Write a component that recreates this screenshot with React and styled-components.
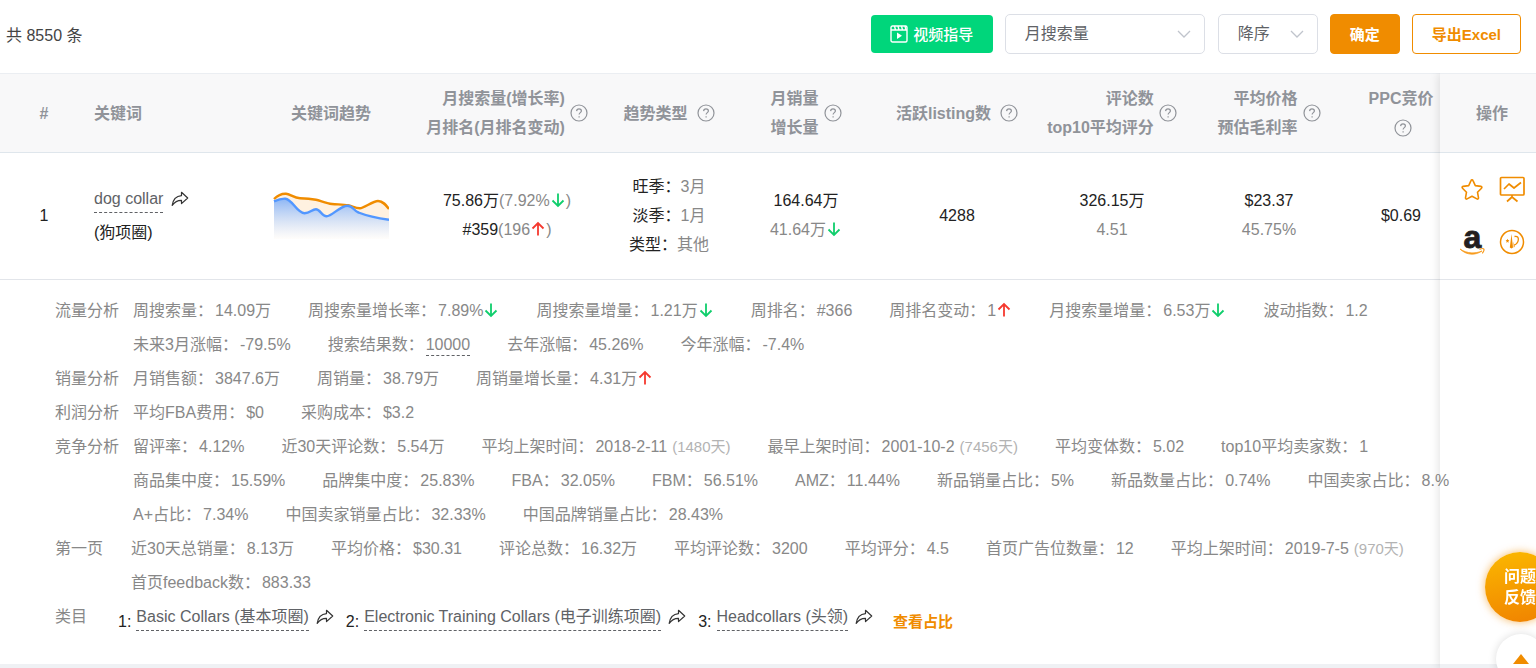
import React from "react";
import styled, { createGlobalStyle } from "styled-components";

const details = [
  {
    title: "流量分析",
    items: [
      { label: "周搜索量", value: "14.09万" },
      { label: "周搜索量增长率", value: "7.89%", trend: "down" },
      { label: "周搜索量增量", value: "1.21万", trend: "down" },
      { label: "周排名", value: "#366" },
      { label: "周排名变动", value: "1", trend: "up" },
      { label: "月搜索量增量", value: "6.53万", trend: "down" },
      { label: "波动指数", value: "1.2" },
      { label: "未来3月涨幅", value: "-79.5%" },
      { label: "搜索结果数", value: "10000", link: true },
      { label: "去年涨幅", value: "45.26%" },
      { label: "今年涨幅", value: "-7.4%" },
    ],
  },
  {
    title: "销量分析",
    items: [
      { label: "月销售额", value: "3847.6万" },
      { label: "周销量", value: "38.79万" },
      { label: "周销量增长量", value: "4.31万", trend: "up" },
    ],
  },
  {
    title: "利润分析",
    items: [
      { label: "平均FBA费用", value: "$0" },
      { label: "采购成本", value: "$3.2" },
    ],
  },
  {
    title: "竞争分析",
    items: [
      { label: "留评率", value: "4.12%" },
      { label: "近30天评论数", value: "5.54万" },
      { label: "平均上架时间", value: "2018-2-11", note: "(1480天)" },
      { label: "最早上架时间", value: "2001-10-2", note: "(7456天)" },
      { label: "平均变体数", value: "5.02" },
      { label: "top10平均卖家数", value: "1" },
      { label: "商品集中度", value: "15.59%" },
      { label: "品牌集中度", value: "25.83%" },
      { label: "FBA", value: "32.05%" },
      { label: "FBM", value: "56.51%" },
      { label: "AMZ", value: "11.44%" },
      { label: "新品销量占比", value: "5%" },
      { label: "新品数量占比", value: "0.74%" },
      { label: "中国卖家占比", value: "8.%" },
      { label: "A+占比", value: "7.34%" },
      { label: "中国卖家销量占比", value: "32.33%" },
      { label: "中国品牌销量占比", value: "28.43%" },
    ],
  },
  {
    title: "第一页",
    labelWidth: 76,
    items: [
      { label: "近30天总销量", value: "8.13万" },
      { label: "平均价格", value: "$30.31" },
      { label: "评论总数", value: "16.32万" },
      { label: "平均评论数", value: "3200" },
      { label: "平均评分", value: "4.5" },
      { label: "首页广告位数量", value: "12" },
      { label: "平均上架时间", value: "2019-7-5", note: "(970天)" },
      { label: "首页feedback数", value: "883.33" },
    ],
  },
];

const categories = [
  "Basic Collars (基本项圈)",
  "Electronic Training Collars (电子训练项圈)",
  "Headcollars (头领)",
];

const columnWidths = [88, 160, 166, 186, 138, 136, 166, 144, 170, 86, 96];

function Trend({ dir }) {
  const up = dir === "up";
  return (
    <TrendIcon viewBox="0 0 14 16" $up={up}>
      {up ? (
        <path d="M7 14.500V2.500M1.500 7.500l5.500-5.500 5.500 5.500" />
      ) : (
        <path d="M7 1.500V13.500M1.500 8.500l5.500 5.500 5.500-5.500" />
      )}
    </TrendIcon>
  );
}

function Share() {
  return (
    <ShareIcon viewBox="0 0 18 18">
      <path d="M10.500 2.300l6.200 5.700-6.200 5.600v-3.200C6.500 10.300 4 11.500 1.200 15.400 2 9.600 5.500 6 10.500 5.600z" />
    </ShareIcon>
  );
}

function Help() {
  return (
    <HelpIcon viewBox="0 0 18 18">
      <circle cx="9" cy="9" r="8" />
      <path d="M6.600 7.100C6.700 5.600 7.700 4.800 9 4.800s2.400.8 2.400 2.100c0 1.700-2.300 1.800-2.300 3.700" />
      <path d="M9.100 12.300v1.200" />
    </HelpIcon>
  );
}

function TrendChart() {
  return (
    <svg width="116" height="48" viewBox="0 0 116 48">
      <defs>
        <linearGradient id="blueFill" x1="0" y1="0" x2="0" y2="1">
          <stop offset="0" stopColor="#8db6f5" />
          <stop offset="1" stopColor="#ffffff" stopOpacity="0.6" />
        </linearGradient>
        <linearGradient id="orangeFill" x1="0" y1="0" x2="0" y2="1">
          <stop offset="0.5" stopColor="#fff1e0" />
          <stop offset="1" stopColor="#fffaf4" />
        </linearGradient>
      </defs>
      <path
        fill="url(#orangeFill)"
        d="M1 8C5 4 9 2.500 13 2.700S21 7 27 7.200S39 8 43 8.700S53 12.500 59 13S71 13.500 75 14.300S83 17.500 87 17.300S100 10 105 10S113 14 116 18V48H1Z"
      />
      <path
        fill="url(#blueFill)"
        d="M1 10.300C5 8.500 9 7.500 12.500 7.700C19 8 24 22.300 31.600 22.300C37 22.300 39 18.300 43 18.300C47 18.300 49 25.300 53.500 25.300C59 25.300 67 14.700 74.500 14.700C80 14.700 81 20 85.500 21.500C93 24.500 103 27 116 28.700V48H1Z"
      />
      <path
        fill="none"
        stroke="#f08c00"
        strokeWidth="2.400"
        d="M1 8C5 4 9 2.500 13 2.700S21 7 27 7.200S39 8 43 8.700S53 12.500 59 13S71 13.500 75 14.300S83 17.500 87 17.300S100 10 105 10S113 14 116 18"
      />
      <path
        fill="none"
        stroke="#5297ff"
        strokeWidth="2.400"
        d="M1 10.300C5 8.500 9 7.500 12.500 7.700C19 8 24 22.300 31.600 22.300C37 22.300 39 18.300 43 18.300C47 18.300 49 25.300 53.500 25.300C59 25.300 67 14.700 74.500 14.700C80 14.700 81 20 85.500 21.500C93 24.500 103 27 116 28.700"
      />
    </svg>
  );
}

function HeadCell({ lines, align, gap }) {
  return (
    <Head>
      <HeadInner $gap={gap}>
        <HeadText $align={align}>
          {lines.map((line) => (
            <div key={line}>{line}</div>
          ))}
        </HeadText>
        {gap ? <Help /> : null}
      </HeadInner>
    </Head>
  );
}

function DetailItem({ item }) {
  return (
    <Item>
      <ItemLabel>{item.label}：</ItemLabel>
      {item.link ? <DashedLink href="#results" $muted>{item.value}</DashedLink> : item.value}
      {item.note ? <Note>{item.note}</Note> : null}
      {item.trend ? <Trend dir={item.trend} /> : null}
    </Item>
  );
}

export default function App() {
  return (
    <Page>
      <GlobalStyle />
      <Toolbar>
        <Total>共 8550 条</Total>
        <VideoButton type="button">
          <svg width="18" height="18" viewBox="0 0 18 18" fill="none" stroke="#fff" strokeWidth="1.4">
            <rect x="1" y="1" width="16" height="16" rx="1.5" />
            <path d="M1 5h16M4.500 1l1 4M8 1l1 4M11.500 1l1 4M15 1l1 4" />
            <path d="M7 7.500v6.500l5-3.200z" fill="#fff" stroke="none" />
          </svg>
          视频指导
        </VideoButton>
        <SelectBox $width={200}>
          <select aria-label="排序字段">
            <option>月搜索量</option>
          </select>
          <Chevron viewBox="0 0 14 14">
            <path d="M1 4l6 6 6-6" />
          </Chevron>
        </SelectBox>
        <SelectBox $width={100}>
          <select aria-label="排序方式">
            <option>降序</option>
          </select>
          <Chevron viewBox="0 0 14 14">
            <path d="M1 4l6 6 6-6" />
          </Chevron>
        </SelectBox>
        <Button type="button" $primary>
          确定
        </Button>
        <Button type="button">导出Excel</Button>
      </Toolbar>

      <TableWrap>
        <Table>
          <colgroup>
            {columnWidths.map((width, i) => (
              <Col key={i} $width={width} />
            ))}
          </colgroup>
          <thead>
            <tr>
              <HeadCell lines={["#"]} />
              <Head $left>关键词</Head>
              <HeadCell lines={["关键词趋势"]} />
              <HeadCell lines={["月搜索量(增长率)", "月排名(月排名变动)"]} align="right" gap={5} />
              <HeadCell lines={["趋势类型"]} gap={9} />
              <HeadCell lines={["月销量", "增长量"]} align="right" gap={5} />
              <HeadCell lines={["活跃listing数"]} gap={9} />
              <HeadCell lines={["评论数", "top10平均评分"]} align="right" gap={5} />
              <HeadCell lines={["平均价格", "预估毛利率"]} align="right" gap={5} />
              <Head $shift>
                <div>PPC竞价</div>
                <HelpLine>
                  <Help />
                </HelpLine>
              </Head>
              <Head $shift>操作</Head>
            </tr>
          </thead>
          <tbody>
            <tr>
              <Cell>1</Cell>
              <Cell $left>
                <Keyword>
                  <DashedLink href="#keyword">dog collar</DashedLink>
                  <Share />
                </Keyword>
                <Translation>(狗项圈)</Translation>
              </Cell>
              <Cell>
                <ChartBox>
                  <TrendChart />
                </ChartBox>
              </Cell>
              <Cell>
                <div>
                  75.86万
                  <Muted>
                    (7.92%
                    <Trend dir="down" />)
                  </Muted>
                </div>
                <div>
                  #359
                  <Muted>
                    (196
                    <Trend dir="up" />)
                  </Muted>
                </div>
              </Cell>
              <Cell>
                <div>
                  旺季：<Muted>3月</Muted>
                </div>
                <div>
                  淡季：<Muted>1月</Muted>
                </div>
                <div>
                  类型：<Muted>其他</Muted>
                </div>
              </Cell>
              <Cell>
                <div>164.64万</div>
                <Muted>
                  41.64万
                  <Trend dir="down" />
                </Muted>
              </Cell>
              <Cell>4288</Cell>
              <Cell>
                <div>326.15万</div>
                <Muted>4.51</Muted>
              </Cell>
              <Cell>
                <div>$23.37</div>
                <Muted>45.75%</Muted>
              </Cell>
              <Cell $shift>$0.69</Cell>
              <Cell $shift>
                <Actions>
                  <IconButton type="button" aria-label="收藏">
                    <svg viewBox="0 0 26 26" fill="none" stroke="#f08c00" strokeWidth="1.6" strokeLinejoin="round">
                      <path d="M13 3.800c.5 0 .8.3 1 .8l2.300 5 5.600.8c1 .2 1.300 1.100.6 1.800l-4 4 1 5.600c.1 1-.7 1.600-1.600 1.100L13 20.300l-4.900 2.600c-.9.5-1.700-.1-1.600-1.100l1-5.600-4-4c-.7-.7-.4-1.600.6-1.800l5.600-.8 2.300-5c.2-.5.5-.8 1-.8z" />
                    </svg>
                  </IconButton>
                  <IconButton type="button" aria-label="趋势图">
                    <svg viewBox="0 0 26 26" fill="none" stroke="#f08c00" strokeWidth="1.700" strokeLinejoin="round">
                      <rect x="1.500" y="1.500" width="23.500" height="17.500" rx="1" />
                      <path d="M5 13l5-5 5 4 7-5.500M13 19v2M8 25.500l5-4.500 5.500 4.500" />
                    </svg>
                  </IconButton>
                  <IconButton type="button" aria-label="亚马逊">
                    <svg viewBox="0 0 26 26">
                      <text
                        x="4.500"
                        y="18.500"
                        fontFamily="Liberation Sans, Arial, sans-serif"
                        fontSize="32"
                        fontWeight="700"
                        fill="#231f20"
                        stroke="#231f20"
                        strokeWidth="0.8"
                      >
                        a
                      </text>
                      <path d="M1 20c6.500 6.500 15.500 6.500 22 2-6.500 2.800-15 2.800-22-2z" fill="#f79a1c" stroke="#f79a1c" strokeWidth="0.8" />
                      <path d="M20.500 20.400c2-.9 4-.9 4.400-.3s-.4 2.600-1.600 4.200" fill="none" stroke="#f79a1c" strokeWidth="1.200" />
                    </svg>
                  </IconButton>
                  <IconButton type="button" aria-label="分析">
                    <svg viewBox="0 0 26 26" fill="none" stroke="#f08c00">
                      <circle cx="13" cy="13" r="11.500" strokeWidth="1.500" />
                      <path d="M12.500 5l1.500 13.500-1.500 1-1.700-1z" fill="#f08c00" stroke="none" />
                      <path d="M14.500 12.500l1.200 5-1 1.200z" fill="#f08c00" stroke="none" />
                      <path d="M8.500 9.800l.6 1.300 1.300.2-1 1 .3 1.400-1.200-.7-1.200.7.3-1.400-1-1 1.300-.2z" fill="#f08c00" stroke="none" />
                      <path d="M15.500 7.500c2.900-.7 4.200 1 3.800 3.500-.4 2.600-2 4.300-4.200 5.200" strokeWidth="1.300" />
                    </svg>
                  </IconButton>
                </Actions>
              </Cell>
            </tr>
            <tr>
              <DetailCell colSpan={11}>
                {details.map((group) => (
                  <Group key={group.title} $labelWidth={group.labelWidth}>
                    <span>{group.title}</span>
                    <Items>
                      {group.items.map((item) => (
                        <DetailItem key={item.label} item={item} />
                      ))}
                    </Items>
                  </Group>
                ))}
                <Group $labelWidth={63}>
                  <span>类目</span>
                  <Categories>
                    {categories.map((name, i) => (
                      <Category key={name}>
                        <Index>{i + 1}:</Index>
                        <DashedLink href={`#category-${i + 1}`}>{name}</DashedLink>
                        <Share />
                      </Category>
                    ))}
                    <RatioLink href="#ratio">查看占比</RatioLink>
                  </Categories>
                </Group>
              </DetailCell>
            </tr>
          </tbody>
        </Table>
        <FixedEdge />
      </TableWrap>

      <Feedback type="button">
        问题
        <br />
        反馈
      </Feedback>
      <BackTop type="button" aria-label="返回顶部">
        <svg width="16" height="10" viewBox="0 0 16 10">
          <path d="M8 0l8 10H0z" fill="#f08c00" />
        </svg>
      </BackTop>
    </Page>
  );
}

const GlobalStyle = createGlobalStyle`
  * {
    box-sizing: border-box;
  }
  body {
    margin: 0;
    background: #ffffff;
    overflow: hidden;
  }
  body, button, select {
    font-family: "Liberation Sans", Arial, "Noto Sans CJK SC", sans-serif;
    font-size: 16px;
  }
`;

const Page = styled.div`
  color: #222222;
`;
const Toolbar = styled.div`
  display: flex;
  align-items: center;
  gap: 12px;
  height: 73px;
  padding: 0 15px 6px 6px;
`;
const Total = styled.span`
  flex: 1;
  color: #444444;
`;
const VideoButton = styled.button`
  display: flex;
  align-items: center;
  justify-content: center;
  gap: 5px;
  width: 122px;
  height: 38px;
  padding: 0;
  border: 0;
  border-radius: 4px;
  background: #00d67b;
  color: #ffffff;
  font-size: 15px;
  font-weight: 500;
`;
const SelectBox = styled.div`
  position: relative;
  width: ${(props) => props.$width}px;

  & + & {
    margin: 0 0 0 1px;
  }
  select {
    appearance: none;
    width: 100%;
    height: 40px;
    padding: 0 30px 0 19px;
    border: 1px solid #dcdfe6;
    border-radius: 5px;
    background: #ffffff;
    color: #606266;
  }
`;
const Chevron = styled.svg`
  position: absolute;
  right: 14px;
  top: 13px;
  width: 14px;
  height: 14px;
  fill: none;
  stroke: #c0c4cc;
  stroke-width: 1.3;
  pointer-events: none;
`;
const Button = styled.button`
  height: 40px;
  padding: 0 19px;
  border: 1px solid #f08c00;
  border-radius: 4px;
  background: ${(props) => (props.$primary ? "#f08c00" : "#ffffff")};
  color: ${(props) => (props.$primary ? "#ffffff" : "#f08c00")};
  font-size: 15px;
  font-weight: 700;
`;

const TableWrap = styled.div`
  position: relative;
  overflow: hidden;
`;
const Table = styled.table`
  width: 100%;
  table-layout: fixed;
  border-spacing: 0;
  border-top: 1px solid #ebeef2;
`;
const Col = styled.col`
  width: ${(props) => props.$width}px;
`;
const Head = styled.th`
  height: 79px;
  padding: 0 0 0 ${(props) => (props.$left ? 6 : props.$shift ? 8 : 0)}px;
  border-bottom: 1px solid #dfe6ec;
  background: #f8f8f9;
  color: #909399;
  font-weight: 700;
  line-height: 29px;
  text-align: ${(props) => (props.$left ? "left" : "center")};
  white-space: nowrap;
`;
const HeadInner = styled.div`
  display: flex;
  align-items: center;
  justify-content: center;
  gap: ${(props) => props.$gap || 0}px;
`;
const HeadText = styled.div`
  text-align: ${(props) => props.$align || "center"};
`;
const HelpIcon = styled.svg`
  flex: none;
  width: 18px;
  height: 18px;
  fill: none;
  stroke: #909399;
  stroke-width: 1.2;
`;
const HelpLine = styled.div`
  display: flex;
  align-items: center;
  justify-content: center;
  height: 29px;
  padding-left: 4px;
`;
const Cell = styled.td`
  height: 127px;
  padding: 0 0 2px ${(props) => (props.$left ? 6 : props.$shift ? 8 : 0)}px;
  border-bottom: 1px solid #e2e5ea;
  line-height: 29px;
  text-align: ${(props) => (props.$left ? "left" : "center")};
  white-space: nowrap;
`;
const Muted = styled.span`
  color: #888888;
`;
const TrendIcon = styled.svg`
  width: 14px;
  height: 16px;
  margin: 0 1px;
  vertical-align: -2px;
  fill: none;
  stroke: ${(props) => (props.$up ? "#f5392f" : "#0fce6c")};
  stroke-width: 1.8;
`;
const ShareIcon = styled.svg`
  flex: none;
  width: 18px;
  height: 18px;
  fill: none;
  stroke: #333333;
  stroke-width: 1.2;
  stroke-linejoin: round;
`;
const DashedLink = styled.a`
  display: inline-block;
  border-bottom: 1px dashed #606266;
  color: ${(props) => (props.$muted ? "#888888" : "#606266")};
  line-height: ${(props) => (props.$muted ? 20 : 26)}px;
  text-decoration: none;
`;
const Keyword = styled.div`
  display: flex;
  align-items: center;
  gap: 8px;
  padding-top: 8px;
`;
const Translation = styled.div`
  line-height: 40px;
`;
const ChartBox = styled.div`
  display: flex;
  justify-content: center;
`;
const Actions = styled.div`
  display: grid;
  grid-template-columns: 26px 26px;
  justify-content: center;
  gap: 27px 14px;
`;
const IconButton = styled.button`
  display: flex;
  padding: 0;
  border: 0;
  background: none;

  svg {
    width: 26px;
    height: 26px;
    overflow: visible;
  }
`;

const DetailCell = styled.td`
  padding: 14px 20px 30px 55px;
  border-bottom: 6px solid #eff1f4;
  color: #888888;
  line-height: 34px;
`;
const Group = styled.div`
  display: grid;
  grid-template-columns: ${(props) => props.$labelWidth || 78}px 1fr;
`;
const Items = styled.div`
  display: flex;
  flex-wrap: wrap;
  column-gap: 37px;
`;
const Item = styled.span`
  white-space: nowrap;
`;
const ItemLabel = styled.span`
  margin-right: 2px;
`;
const Note = styled.span`
  margin-left: 5px;
  color: #b3b3b3;
  font-size: 15px;
`;
const Categories = styled.div`
  display: flex;
  align-items: center;
  gap: 12px;
`;
const Category = styled.span`
  display: flex;
  align-items: center;
  gap: 5px;
  white-space: nowrap;

  svg {
    margin-left: 2px;
  }
`;
const Index = styled.span`
  padding-top: 10px;
  line-height: 24px;
  color: #222222;
`;
const RatioLink = styled.a`
  padding: 10px 0 0 8px;
  color: #f08c00;
  font-size: 15px;
  font-weight: 700;
  line-height: 24px;
  text-decoration: none;
`;
const FixedEdge = styled.div`
  position: absolute;
  top: 0;
  right: 0;
  bottom: 0;
  width: 96px;
  box-shadow: 0 0 10px rgba(0, 0, 0, 0.14);
  pointer-events: none;
`;

const Feedback = styled.button`
  position: fixed;
  right: -19px;
  bottom: 46px;
  width: 70px;
  height: 70px;
  padding: 0;
  border: 0;
  border-radius: 50%;
  background: linear-gradient(170deg, #fbb800, #f08200);
  box-shadow: 0 0 8px rgba(240, 140, 0, 0.6);
  color: #ffffff;
  font-weight: 700;
  line-height: 21px;
`;
const BackTop = styled.button`
  position: fixed;
  right: -10px;
  bottom: -16px;
  display: flex;
  align-items: center;
  justify-content: center;
  width: 50px;
  height: 50px;
  padding: 0;
  border: 0;
  border-radius: 50%;
  background: #ffffff;
  box-shadow: 0 0 8px rgba(0, 0, 0, 0.14);
`;
